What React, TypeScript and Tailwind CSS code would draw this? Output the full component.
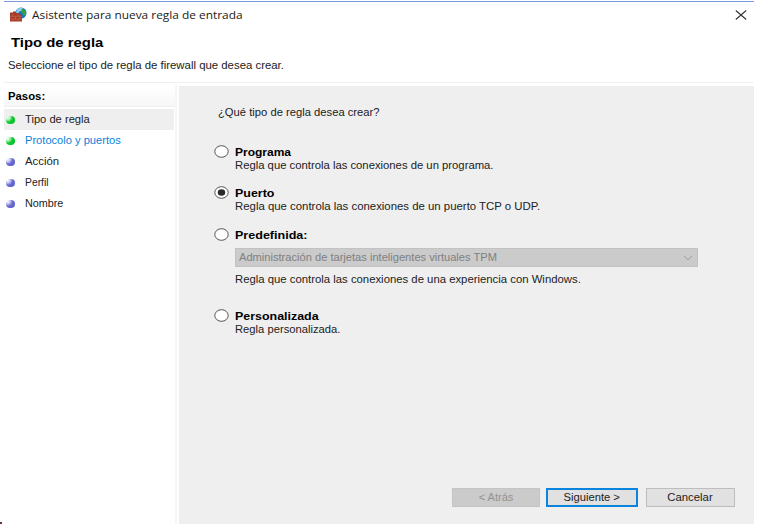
import type { ReactNode } from "react";

function Text({ className = "", children }: { className?: string; children: ReactNode }) {
  return <span className={`inline-block origin-left whitespace-nowrap ${className}`}>{children}</span>;
}

function FirewallIcon() {
  return (
    <svg width="17" height="15" viewBox="0 0 17 15" className="shrink-0">
      <circle cx="11" cy="6" r="5.5" fill="#1873c4" />
      <path d="M7 2.5C9 .5 12 .2 13 1.2L11.5 4 9 4.5 8 7 6 6Z" fill="#8fd3ef" />
      <path d="M12 1.5 15.5 4 16 8 13.5 9 12.5 6 11 4Z" fill="#35a53b" />
      <path d="M0 5.5H3V4.5H6V6H9V7.5H12V14.5H0Z" fill="#a53b26" />
      <path d="M0 9.3H12M0 12H12M3 7V9M8 7V9M5.5 9.5V12M10 9.5V12M3 12V14.5M8 12V14.5" stroke="#c87a60" strokeWidth=".5" />
    </svg>
  );
}

function Bullet({ green }: { green: boolean }) {
  return (
    <span
      className={`h-[8px] w-[9px] shrink-0 rounded-full ${
        green
          ? "bg-[radial-gradient(circle_at_20%_18%,#f4fff5_0%,#a8efb2_24%,#0ac92d_50%,#08bd27_100%)]"
          : "bg-[radial-gradient(circle_at_20%_18%,#fafaff_0%,#c3c5ee_24%,#6769d0_50%,#5c5dc6_100%)]"
      }`}
    />
  );
}

const steps = [
  { name: "Tipo de regla", green: true, style: "scale-x-[1.015]", row: "bg-[#efefef]" },
  { name: "Protocolo y puertos", green: true, style: "scale-x-[1.01] text-[#0a84dc]", row: "" },
  { name: "Acción", green: false, style: "scale-x-[1.03]", row: "" },
  { name: "Perfil", green: false, style: "scale-x-[0.94]", row: "" },
  { name: "Nombre", green: false, style: "scale-x-[0.98]", row: "" },
];

function Radio({ checked = false }: { checked?: boolean }) {
  return (
    <svg width="15" height="13" viewBox="0 0 15 13" className="-mt-px shrink-0">
      <ellipse cx="7.5" cy="6.5" rx="6.7" ry="5.8" fill="#fff" stroke="#555" strokeWidth="1" />
      {checked && <ellipse cx="7.5" cy="6.5" rx="3.7" ry="3.2" fill="#2b2b2b" />}
    </svg>
  );
}

function Option({
  label,
  labelStyle,
  description,
  descriptionStyle = "",
  checked,
}: {
  label: string;
  labelStyle: string;
  description?: string;
  descriptionStyle?: string;
  checked?: boolean;
}) {
  return (
    <div className="flex gap-[6px]">
      <Radio checked={checked} />
      <div className="flex flex-col items-start leading-[13px]">
        <Text className={`font-bold text-black ${labelStyle}`}>{label}</Text>
        {description && <Text className={descriptionStyle}>{description}</Text>}
      </div>
    </div>
  );
}

export default function App() {
  return (
    <div className="flex h-[531px] w-[760px] flex-col overflow-hidden bg-white pl-[4px] pr-[6px] font-['Liberation_Sans',Arial,sans-serif] text-[11px] leading-[13px] text-[#222]">
      <div className="mt-px h-px shrink-0 bg-[#789bdc]" />
      <header className="flex h-[25px] shrink-0 items-center justify-between pl-[6px] pr-[7px]">
        <div className="flex items-center gap-[5px]">
          <FirewallIcon />
          <Text className="scale-x-[1.08] font-['Open_Sans','Noto_Sans',sans-serif] text-[11px]">
            Asistente para nueva regla de entrada
          </Text>
        </div>
        <svg width="12" height="10" viewBox="0 0 12 10">
          <path d="M.8.5 11.2 9.5M11.2.5.8 9.5" stroke="#333" strokeWidth="1.1" />
        </svg>
      </header>
      <div className="flex h-[56px] shrink-0 flex-col items-start border-b border-[#f0f0f0] pt-[10px]">
        <Text className="ml-[7px] scale-x-[1.24] text-[12px] font-bold text-black">Tipo de regla</Text>
        <Text className="ml-[4px] mt-[9px] scale-x-[1.035]">Seleccione el tipo de regla de firewall que desea crear.</Text>
      </div>
      <div className="mt-[3px] flex h-[438px] shrink-0">
        <aside className="flex w-[171px] shrink-0 flex-col">
          <div className="flex h-[21px] items-center border-b border-[#efefef] bg-linear-to-b from-white to-[#f7f7f7] pl-[4px]">
            <Text className="scale-x-[1.03] pt-px font-bold text-black">Pasos:</Text>
          </div>
          <ul className="mt-[2px] flex flex-col">
            {steps.map((step) => (
              <li key={step.name} className={`mr-px flex h-[21px] items-center gap-[10px] pl-[2px] ${step.row}`}>
                <Bullet green={step.green} />
                <Text className={step.style}>{step.name}</Text>
              </li>
            ))}
          </ul>
        </aside>
        <div className="mr-[2px] w-[2px] bg-[#f6f6f6]" />
        <main className="flex flex-1 flex-col bg-[#efefef] pl-[35px]">
          <Text className="ml-[4px] mt-[20px] self-start scale-x-[1.02]">¿Qué tipo de regla desea crear?</Text>
          <div className="mt-[27px] h-[41px]">
            <Option label="Programa" labelStyle="scale-x-[1.09]" description="Regla que controla las conexiones de un programa." descriptionStyle="scale-x-[1.026]" />
          </div>
          <div className="h-[42px]">
            <Option checked label="Puerto" labelStyle="scale-x-[1.13]" description="Regla que controla las conexiones de un puerto TCP o UDP." descriptionStyle="scale-x-[1.035]" />
          </div>
          <div className="h-[81px]">
            <Option label="Predefinida:" labelStyle="scale-x-[1.14]" />
            <div className="ml-[21px] mt-[6px] flex h-[19px] w-[463px] items-center justify-between border border-[#c2c2c2] bg-[#cbcbcb] pl-[3px] pr-[4px] text-[#808080]">
              <Text className="scale-x-[1.01]">Administración de tarjetas inteligentes virtuales TPM</Text>
              <svg width="10" height="6" viewBox="0 0 10 6">
                <path d="M1 1 5 4.8 9 1" fill="none" stroke="#a0a0a0" />
              </svg>
            </div>
            <Text className="ml-[21px] mt-[6px] scale-x-[1.03]">Regla que controla las conexiones de una experiencia con Windows.</Text>
          </div>
          <Option label="Personalizada" labelStyle="scale-x-[1.13]" description="Regla personalizada." descriptionStyle="scale-x-[1.02]" />
          <div className="mb-[17px] mr-[19px] mt-auto flex justify-end gap-[6px]">
            <button disabled className="flex h-[19px] w-[88px] items-center justify-center border border-[#c4c4c4] bg-[#cbcbcb] text-[#929292]">
              &lt; Atrás
            </button>
            <button className="flex h-[19px] w-[92px] items-center justify-center border-2 border-[#0a84dc] bg-[#e1e1e1]">
              <span className="scale-x-[1.02]">Siguiente &gt;</span>
            </button>
            <button className="ml-[2px] flex h-[19px] w-[89px] items-center justify-center border border-[#bdbdbd] bg-[#e1e1e1]">
              <span className="scale-x-[1.03]">Cancelar</span>
            </button>
          </div>
        </main>
      </div>
      <div className="-ml-[4px] -mt-[2px] h-[2px] w-[2px] shrink-0 bg-linear-to-r from-[#701818] to-[#164c78]" />
    </div>
  );
}
